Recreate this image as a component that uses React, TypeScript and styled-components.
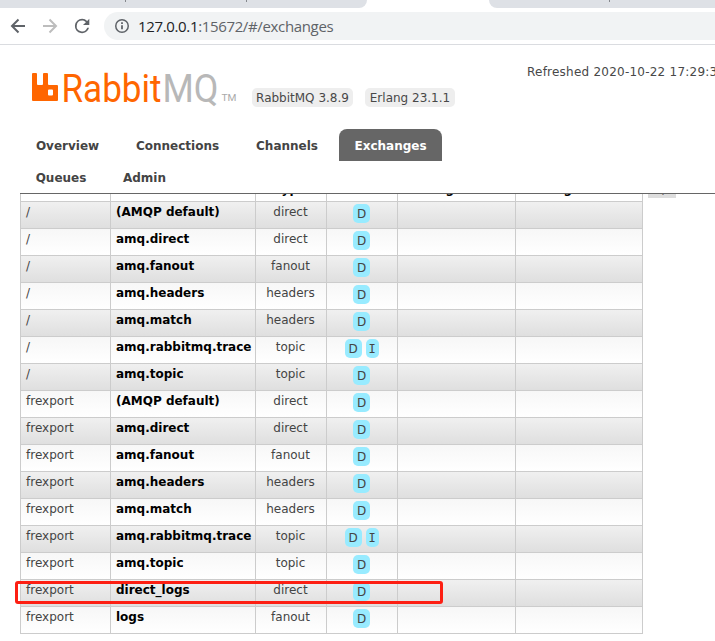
import React from "react";
import styled, { createGlobalStyle } from "styled-components";

const GlobalStyle = createGlobalStyle`
  * { box-sizing: border-box; }
  html, body { margin: 0; background: #fff; overflow: hidden; }
  body { font: 12px/15px Verdana, "DejaVu Sans", sans-serif; color: #484848; }
`;

const Page = styled.div`
  width: 715px;
  height: 641px;
  overflow: hidden;
  background: #fff;
`;

const TabStrip = styled.div`
  display: flex;
  justify-content: space-between;
  height: 8px;
`;

const TabGroup = styled.div<{ $side: "left" | "right" }>`
  position: relative;
  width: ${(p) => (p.$side === "left" ? 367 : 226)}px;
  background: #dee1e6;
  border-radius: ${(p) => (p.$side === "left" ? "0 0 8px 0" : "0 0 0 8px")};
`;

const TabDivider = styled.i<{ $x: number }>`
  position: absolute;
  left: ${(p) => p.$x}px;
  top: 0;
  width: 1px;
  height: 2px;
  background: #85888d;
`;

const Toolbar = styled.div`
  display: flex;
  align-items: center;
  height: 37px;
  padding-left: 8px;
  border-bottom: 1px solid #dadce0;
`;

const ToolIcon = styled.svg`
  display: block;
  width: 20px;
  height: 20px;
  margin-right: 12px;
  flex: none;
`;

const AddressBar = styled.div`
  display: flex;
  align-items: center;
  flex: 1;
  height: 28px;
  padding-left: 10px;
  border-radius: 14px 0 0 14px;
  background: #f1f3f4;
`;

const InfoIcon = styled.svg`
  width: 16px;
  height: 16px;
  margin-right: 8px;
`;

const Url = styled.span`
  margin-top: -1px;
  font: 15px/20px "Segoe UI", "Open Sans", sans-serif;
  letter-spacing: -0.35px;
  color: #5f6368;
  white-space: nowrap;
`;

const Host = styled.span`
  color: #202124;
`;

const Header = styled.header`
  margin-left: 20px;
  height: 149px;
  border-bottom: 1px solid #666;
`;

const Brand = styled.div`
  display: flex;
  height: 84px;
`;

const Logo = styled.svg`
  display: block;
  width: 222px;
  height: 48px;
  margin: 15px 0 0 10px;
  flex: none;
`;

const Version = styled.span<{ $w: number }>`
  flex: none;
  width: ${(p) => p.$w}px;
  height: 19px;
  margin: 43px 12px 0 0;
  border-radius: 5px;
  background: #eee;
  text-align: center;
  line-height: 20px;
  white-space: nowrap;
`;

const Refreshed = styled.span`
  flex: none;
  margin: 20px 0 0 60px;
  white-space: nowrap;
  letter-spacing: 0.23px;
`;

const NavRow = styled.nav`
  display: flex;
  gap: 5px;
  height: 32px;
`;

const NavTab = styled.a<{ $w: number; $active?: boolean }>`
  width: ${(p) => p.$w}px;
  height: 32px;
  text-align: center;
  font-weight: bold;
  line-height: 34px;
  border-radius: 8px 8px 0 0;
  color: ${(p) => (p.$active ? "#fff" : "#444")};
  background: ${(p) => (p.$active ? "#666" : "transparent")};
`;

const Content = styled.main`
  position: relative;
  display: flex;
  align-items: flex-start;
  gap: 5px;
  height: 447px;
  padding-left: 20px;
`;

const HeadClip = styled.div`
  height: 7px;
  overflow: hidden;
`;

const HeadRow = styled.div`
  display: grid;
  grid-template-columns: 90px 145px 71px 71px 118px 127px;
  height: 27px;
  margin-top: -20px;
  border-left: 1px solid #ccc;
`;

const Row = styled(HeadRow)<{ $odd: boolean }>`
  margin-top: 0;
  border-top: 1px solid #ccc;
  background: ${(p) =>
    p.$odd ? "linear-gradient(#f0f0f0, #dfdfdf)" : "linear-gradient(#f7f7f7, #fff)"};
`;

const Table = styled.div`
  width: 623px;
  border-bottom: 1px solid #ccc;
`;

const Cell = styled.div<{ $center?: boolean; $bold?: boolean }>`
  padding: ${(p) => (p.$center ? "3px 5px 0 4px" : "3px 4px 0 5px")};
  border-right: 1px solid #ccc;
  text-align: ${(p) => (p.$center ? "center" : "left")};
  font-weight: ${(p) => (p.$bold ? "bold" : "normal")};
  color: ${(p) => (p.$bold ? "#000" : "#444")};
  white-space: nowrap;
`;

const HeadCell = styled(Cell)`
  padding-top: 8px;
`;

const Features = styled(Cell)`
  display: flex;
  justify-content: center;
  gap: 4px;
  padding: 2px 1px 0 0;
`;

const Flag = styled.span<{ $narrow?: boolean }>`
  width: ${(p) => (p.$narrow ? 13 : 17)}px;
  height: 19px;
  border-radius: 5px;
  background: #98ebff;
  font-family: ${(p) => (p.$narrow ? '"DejaVu Sans Mono", monospace' : "inherit")};
  text-align: center;
  line-height: 20px;
`;

const ColumnToggle = styled.div`
  width: 28px;
  height: 4px;
  overflow: hidden;
  background: #ddd;
  color: #000;
  font-weight: bold;
  text-align: center;
`;

const ToggleLabel = styled.span`
  display: block;
  height: 16px;
  margin-top: -13px;
  line-height: 16px;
`;

const Highlight = styled.div`
  position: absolute;
  left: 15px;
  top: 387px;
  width: 428px;
  height: 23px;
  border: 3px solid #fd1f13;
  border-radius: 3px;
`;

const names: [string, string][] = [
  ["(AMQP default)", "direct"],
  ["amq.direct", "direct"],
  ["amq.fanout", "fanout"],
  ["amq.headers", "headers"],
  ["amq.match", "headers"],
  ["amq.rabbitmq.trace", "topic"],
  ["amq.topic", "topic"],
];

const rows: [string, string, string][] = [
  ...names.map(([n, t]): [string, string, string] => ["/", n, t]),
  ...names.map(([n, t]): [string, string, string] => ["frexport", n, t]),
  ["frexport", "direct_logs", "direct"],
  ["frexport", "logs", "fanout"],
];

const BrowserChrome = () => (
  <>
    <TabStrip>
      <TabGroup $side="left">
        <TabDivider $x={125} />
        <TabDivider $x={246} />
      </TabGroup>
      <TabGroup $side="right">
        <TabDivider $x={120} />
      </TabGroup>
    </TabStrip>
    <Toolbar>
      <ToolIcon viewBox="0 0 20 20" fill="none" stroke="#5f6368" strokeWidth="2">
        <path d="M17 10H4.500M10.500 3.500 4 10l6.500 6.500" />
      </ToolIcon>
      <ToolIcon viewBox="0 0 20 20" fill="none" stroke="#bdbdbd" strokeWidth="2">
        <path d="M3 10h12.500M9.500 3.500 16 10l-6.500 6.500" />
      </ToolIcon>
      <ToolIcon viewBox="0 0 20 20">
        <path
          fill="#5f6368"
          transform="translate(-.700 -.800) scale(.9)"
          d="M17.650 6.350A7.950 7.950 0 0 0 12 4a8 8 0 1 0 7.730 10h-2.080A6 6 0 1 1 12 6c1.660 0 3.140.69 4.220 1.780L13 11h7V4z"
        />
      </ToolIcon>
      <AddressBar>
        <InfoIcon viewBox="0 0 16 16" fill="none" stroke="#5f6368" strokeWidth="1.500">
          <circle cx="8" cy="8" r="6.250" />
          <path d="M8 7.200v4M8 4.300v1.600" strokeWidth="1.800" />
        </InfoIcon>
        <Url>
          <Host>127.0.0.1</Host>:15672/#/exchanges
        </Url>
      </AddressBar>
    </Toolbar>
  </>
);

const RabbitLogo = () => (
  <Logo viewBox="0 0 222 48" fontFamily="Roboto, sans-serif">
    <path
      fill="#f60"
      fillRule="evenodd"
      d="M3 13h3q1 0 1 1v10q0 1 1 1h4q1 0 1-1V14q0-1 1-1h3q1 0 1 1v10q0 1 1 1h8q1 0 1 1v14q0 1-1 1H3q-1 0-1-1V14q0-1 1-1zM18 30.500v4q0 1 1 1h3q1 0 1-1v-4q0-1-1-1h-3q-1 0-1 1z"
    />
    <text x="31.500" y="41.500" fontSize="38.500" fill="#f60" textLength="100" lengthAdjust="spacingAndGlyphs">
      Rabbit
    </text>
    <text x="132.500" y="41.500" fontSize="38.500" fill="#b8b8b8" textLength="56" lengthAdjust="spacingAndGlyphs">
      MQ
    </text>
    <text x="191.500" y="41" fontSize="9.500" fill="#aaa" textLength="15" lengthAdjust="spacingAndGlyphs">
      TM
    </text>
  </Logo>
);

export default function App() {
  return (
    <Page>
      <GlobalStyle />
      <BrowserChrome />
      <Header>
        <Brand>
          <RabbitLogo />
          <Version $w={101}>RabbitMQ 3.8.9</Version>
          <Version $w={90}>Erlang 23.1.1</Version>
          <Refreshed>Refreshed 2020-10-22 17:29:3</Refreshed>
        </Brand>
        <NavRow>
          <NavTab $w={95}>Overview</NavTab>
          <NavTab $w={115}>Connections</NavTab>
          <NavTab $w={94}>Channels</NavTab>
          <NavTab $w={103} $active>Exchanges</NavTab>
        </NavRow>
        <NavRow>
          <NavTab $w={82}>Queues</NavTab>
          <NavTab $w={75}>Admin</NavTab>
        </NavRow>
      </Header>
      <Content>
        <Table>
          <HeadClip>
            <HeadRow>
              <HeadCell />
              <HeadCell />
              <HeadCell $center $bold>Type</HeadCell>
              <HeadCell />
              <HeadCell $bold>Message rate in</HeadCell>
              <HeadCell $bold>Message rate out</HeadCell>
            </HeadRow>
          </HeadClip>
          {rows.map(([host, name, type], i) => (
            <Row key={i} $odd={i % 2 === 0}>
              <Cell>{host}</Cell>
              <Cell $bold>{name}</Cell>
              <Cell $center>{type}</Cell>
              <Features>
                <Flag>D</Flag>
                {name === "amq.rabbitmq.trace" && <Flag $narrow>I</Flag>}
              </Features>
              <Cell />
              <Cell />
            </Row>
          ))}
        </Table>
        <ColumnToggle>
          <ToggleLabel>+/-</ToggleLabel>
        </ColumnToggle>
        <Highlight />
      </Content>
    </Page>
  );
}
